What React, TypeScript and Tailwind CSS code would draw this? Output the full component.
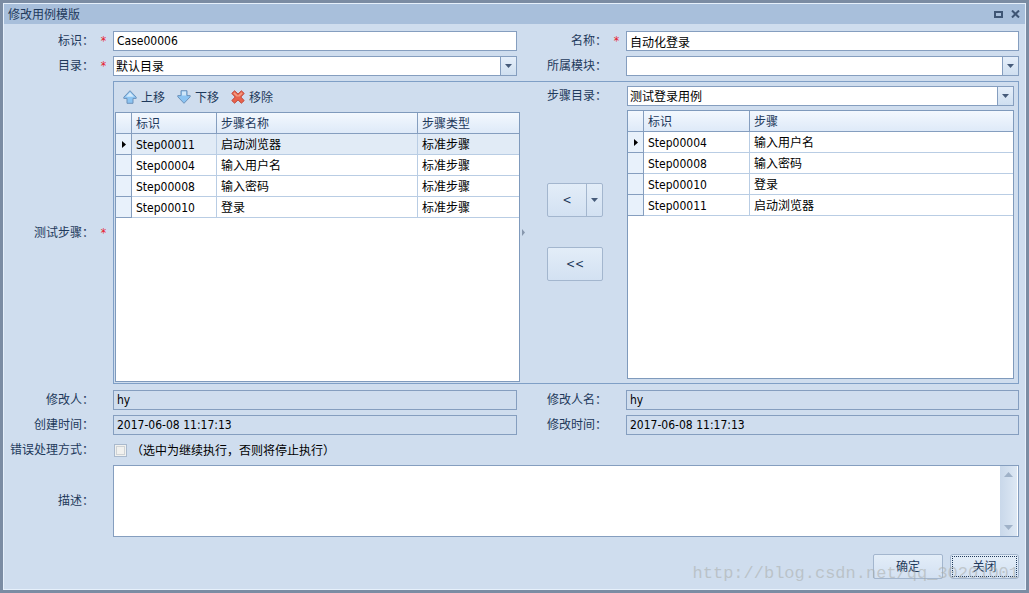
import type { ReactNode } from "react";

type FieldLabelProps = { htmlFor: string; text: string; required?: boolean };

function FieldLabel({ htmlFor, text, required }: FieldLabelProps) {
  return (
    <div className="flex items-center justify-end text-[#1e395b]">
      <label htmlFor={htmlFor} className="whitespace-nowrap">{text}</label>
      <span className="w-[19px] text-center text-[#e8202c]">{required ? "*" : ""}</span>
    </div>
  );
}

function TextField({ id, value, readOnly }: { id: string; value: string; readOnly?: boolean }) {
  return (
    <input
      id={id}
      type="text"
      defaultValue={value}
      readOnly={readOnly}
      className={
        "h-5 w-full min-w-0 border border-[#859ebf] px-[3px] text-black outline-none " +
        (readOnly ? "bg-[#cfddee]" : "bg-white")
      }
    />
  );
}

function DownArrow() {
  return (
    <svg width="7" height="4" viewBox="0 0 7 4" aria-hidden="true">
      <path d="M0 0H7L3.5 4Z" fill="#465b7a" />
    </svg>
  );
}

function SelectField({ id, options }: { id: string; options: string[] }) {
  return (
    <div className="relative h-5 min-w-0">
      <select
        id={id}
        className="h-5 w-full appearance-none border border-[#859ebf] bg-white pl-[2px] pr-5 pt-px text-black outline-none"
      >
        {options.map((option) => (
          <option key={option}>{option}</option>
        ))}
      </select>
      <span className="pointer-events-none absolute inset-y-px right-px flex w-4 items-center justify-center border-l border-[#859ebf] bg-linear-to-b from-[#e6effa] to-[#cfdff0]">
        <DownArrow />
      </span>
    </div>
  );
}

type StepTableProps = {
  label: string;
  headers: string[];
  widths: string[];
  rows: string[][];
  highlight?: boolean;
};

function StepTable({ label, headers, widths, rows, highlight }: StepTableProps) {
  return (
    <div className="min-h-[269px] flex-1 border border-[#7f9abc] bg-white">
      <table aria-label={label} className="w-full table-fixed border-separate border-spacing-0 text-left">
        <colgroup>
          <col className="w-4" />
          {widths.map((width, i) => (
            <col key={i} className={width} />
          ))}
        </colgroup>
        <thead>
          <tr className="h-[21px] bg-linear-to-b from-[#f3f8fe] to-[#dde9f8] text-[#1e395b]">
            <th className="border-b border-r border-[#859ebf] p-0" />
            {headers.map((header, i) => (
              <th
                key={header}
                className={
                  "border-b border-[#859ebf] pb-0 pl-1 pr-0 pt-[2px] font-normal " +
                  (i < headers.length - 1 ? "border-r" : "")
                }
              >
                {header}
              </th>
            ))}
          </tr>
        </thead>
        <tbody>
          {rows.map((row, r) => (
            <tr key={row[0]} className={"h-[21px] " + (highlight && r === 0 ? "bg-[#e1ebf6]" : "")}>
              <td className="border-b border-r border-[#859ebf] bg-[#e8f1fb] p-0">
                {r === 0 && (
                  <svg width="4" height="7" viewBox="0 0 4 7" className="mx-auto" aria-hidden="true">
                    <path d="M0 0L4 3.5L0 7Z" fill="#000" />
                  </svg>
                )}
              </td>
              {row.map((cell, i) => (
                <td
                  key={i}
                  className={
                    "truncate border-b border-[#b9cde4] pb-0 pl-1 pr-0 pt-[2px] text-black " +
                    (i < row.length - 1 ? "border-r" : "")
                  }
                >
                  {cell}
                </td>
              ))}
            </tr>
          ))}
        </tbody>
      </table>
    </div>
  );
}

function ToolButton({ text, children }: { text: string; children: ReactNode }) {
  return (
    <button type="button" className="flex items-center gap-1 text-[#1e395b]">
      {children}
      <span className="pt-[2px]">{text}</span>
    </button>
  );
}

const leftRows = [
  ["Step00011", "启动浏览器", "标准步骤"],
  ["Step00004", "输入用户名", "标准步骤"],
  ["Step00008", "输入密码", "标准步骤"],
  ["Step00010", "登录", "标准步骤"],
];

const rightRows = [
  ["Step00004", "输入用户名"],
  ["Step00008", "输入密码"],
  ["Step00010", "登录"],
  ["Step00011", "启动浏览器"],
];

const face = "bg-linear-to-b from-[#e3edf8] to-[#d3e1f2] border-[#a3b6ce] text-[#1e395b]";

export default function App() {
  return (
    <div
      lang="zh-CN"
      className="min-h-screen border-[3px] border-[#7b8ca3] bg-[#cfddee] font-['DejaVu_Sans_Condensed','Noto_Sans_CJK_SC',sans-serif] text-[12px] leading-4"
    >
      <div className="border border-[#e6f0fb]">
        <header className="flex h-5 items-center justify-between bg-[#a8bfdb] pl-1 pr-[5px] text-[#1e395b]">
          <h1 className="pt-px">修改用例模版</h1>
          <div className="flex items-center gap-2">
            <button type="button" aria-label="最大化">
              <svg width="9" height="7" viewBox="0 0 9 7">
                <path d="M1 1H8V6H1Z" fill="none" stroke="#3f5675" strokeWidth="2" />
              </svg>
            </button>
            <button type="button" aria-label="关闭窗口">
              <svg width="9" height="8" viewBox="0 0 9 8">
                <path d="M1 0.5L8 7.5M8 0.5L1 7.5" stroke="#3f5675" strokeWidth="2" />
              </svg>
            </button>
          </div>
        </header>

        <form className="pb-[10px] pr-[6px] pt-[7px]" onSubmit={(e) => e.preventDefault()}>
          <div className="grid grid-cols-[109px_404fr_109px_393fr] gap-y-[5px]">
            <FieldLabel htmlFor="code" text="标识：" required />
            <TextField id="code" value="Case00006" />
            <FieldLabel htmlFor="name" text="名称：" required />
            <TextField id="name" value="自动化登录" />

            <FieldLabel htmlFor="folder" text="目录：" required />
            <SelectField id="folder" options={["默认目录"]} />
            <FieldLabel htmlFor="module" text="所属模块：" />
            <SelectField id="module" options={[""]} />

            <FieldLabel htmlFor="steps" text="测试步骤：" required />
            <section
              id="steps"
              className="col-span-3 mb-px grid grid-cols-[405fr_107px_387fr] border border-[#7f9fc6] pl-px pr-1"
            >
              <div className="flex flex-col pb-px">
                <div className="flex h-[30px] items-center gap-3 pl-2">
                  <ToolButton text="上移">
                    <svg width="14" height="14" viewBox="0 0 14 14" aria-hidden="true">
                      <path d="M7 0.7L13.2 7.2V8.4H10V13.3H4V8.4H0.8V7.2Z" fill="#8cc4f2" stroke="#6d92ba" />
                      <path d="M7 2.3L11 6.7H3Z" fill="#d3e9fa" />
                    </svg>
                  </ToolButton>
                  <ToolButton text="下移">
                    <svg width="14" height="14" viewBox="0 0 14 14" aria-hidden="true">
                      <path d="M7 13.3L13.2 6.8V5.6H10V0.7H4V5.6H0.8V6.8Z" fill="#8cc4f2" stroke="#6d92ba" />
                      <path d="M5 1.5H9V5.5H5Z" fill="#cfe6f8" />
                    </svg>
                  </ToolButton>
                  <ToolButton text="移除">
                    <svg width="14" height="14" viewBox="0 0 14 14" aria-hidden="true">
                      <path
                        d="M3.6 0.8L7 4.1L10.4 0.8L13.2 3.4L9.8 7L13.2 10.6L10.4 13.2L7 9.9L3.6 13.2L0.8 10.6L4.2 7L0.8 3.4Z"
                        fill="#e8624c"
                        stroke="#bf4a3c"
                        strokeLinejoin="round"
                      />
                      <path d="M3.6 2.2L7 5.5L10.4 2.2L11.7 3.4L8.5 6.5H5.5L2.3 3.4Z" fill="#f39a80" />
                    </svg>
                  </ToolButton>
                </div>
                <StepTable
                  label="测试步骤"
                  headers={["标识", "步骤名称", "步骤类型"]}
                  widths={["w-[85px]", "w-[201px]", "w-auto"]}
                  rows={leftRows}
                  highlight
                />
              </div>

              <div className="flex">
                <div className="flex w-[7px] items-center justify-center">
                  <svg width="3" height="7" viewBox="0 0 3 7" aria-hidden="true">
                    <path d="M0 0L3 3.5L0 7Z" fill="#8797ad" />
                  </svg>
                </div>
                <div className="flex flex-1 flex-col pl-5 pt-[6px]">
                  <label htmlFor="step-folder" className="text-[#1e395b]">步骤目录：</label>
                  <div className={"mt-[79px] flex h-[34px] w-14 rounded-[2px] border " + face}>
                    <button type="button" className="flex-1">&lt;</button>
                    <button
                      type="button"
                      aria-label="更多"
                      className="flex w-4 items-center justify-center border-l border-[#a3b6ce]"
                    >
                      <DownArrow />
                    </button>
                  </div>
                  <button type="button" className={"mt-[30px] h-[34px] w-14 rounded-[2px] border " + face}>
                    &lt;&lt;
                  </button>
                </div>
              </div>

              <div className="flex flex-col gap-1 py-1">
                <SelectField id="step-folder" options={["测试登录用例"]} />
                <StepTable
                  label="可选步骤"
                  headers={["标识", "步骤"]}
                  widths={["w-[106px]", "w-auto"]}
                  rows={rightRows}
                />
              </div>
            </section>

            <FieldLabel htmlFor="editor" text="修改人：" />
            <TextField id="editor" value="hy" readOnly />
            <FieldLabel htmlFor="editor-name" text="修改人名：" />
            <TextField id="editor-name" value="hy" readOnly />

            <FieldLabel htmlFor="created" text="创建时间：" />
            <TextField id="created" value="2017-06-08 11:17:13" readOnly />
            <FieldLabel htmlFor="modified" text="修改时间：" />
            <TextField id="modified" value="2017-06-08 11:17:13" readOnly />

            <FieldLabel htmlFor="on-error" text="错误处理方式：" />
            <div className="col-span-3 flex h-5 items-center gap-1 pl-px">
              <input
                id="on-error"
                type="checkbox"
                className="size-[13px] appearance-none border border-[#a9b9cd] bg-[#f1f1ef] outline-1 -outline-offset-3 outline-[#cfd3d6] checked:bg-[#5b7da8]"
              />
              <label htmlFor="on-error" className="pt-[2px] text-black">（选中为继续执行，否则将停止执行）</label>
            </div>

            <FieldLabel htmlFor="description" text="描述：" />
            <div className="col-span-3 flex h-[72px] border border-[#859ebf] bg-white">
              <textarea id="description" className="flex-1 resize-none px-[3px] text-black outline-none" />
              <div className="mr-px flex w-[17px] flex-col items-center justify-between bg-linear-to-r from-[#c9d8ea] to-[#dde8f4] py-[6px]">
                <svg width="9" height="5" viewBox="0 0 9 5" aria-hidden="true">
                  <path d="M4.5 0L9 5H0Z" fill="#a0b2c8" />
                </svg>
                <svg width="9" height="5" viewBox="0 0 9 5" aria-hidden="true">
                  <path d="M0 0H9L4.5 5Z" fill="#a0b2c8" />
                </svg>
              </div>
            </div>
          </div>

          <footer className="relative mt-[17px] flex justify-end gap-[7px]">
            <button type="button" className={"h-[25px] w-[70px] rounded-[2px] border pt-px " + face}>确定</button>
            <button type="button" className={"h-[25px] w-[69px] rounded-[3px] border p-px " + face}>
              <span className="flex h-full items-center justify-center border border-dotted border-[#1e395b] pt-px">
                关闭
              </span>
            </button>
            <span className="pointer-events-none absolute right-0 top-[10px] whitespace-nowrap font-['Liberation_Mono',monospace] text-[17px] leading-5 text-[#a9aca8]/55">
              http://blog.csdn.net/qq_30201001
            </span>
          </footer>
        </form>
      </div>
    </div>
  );
}
